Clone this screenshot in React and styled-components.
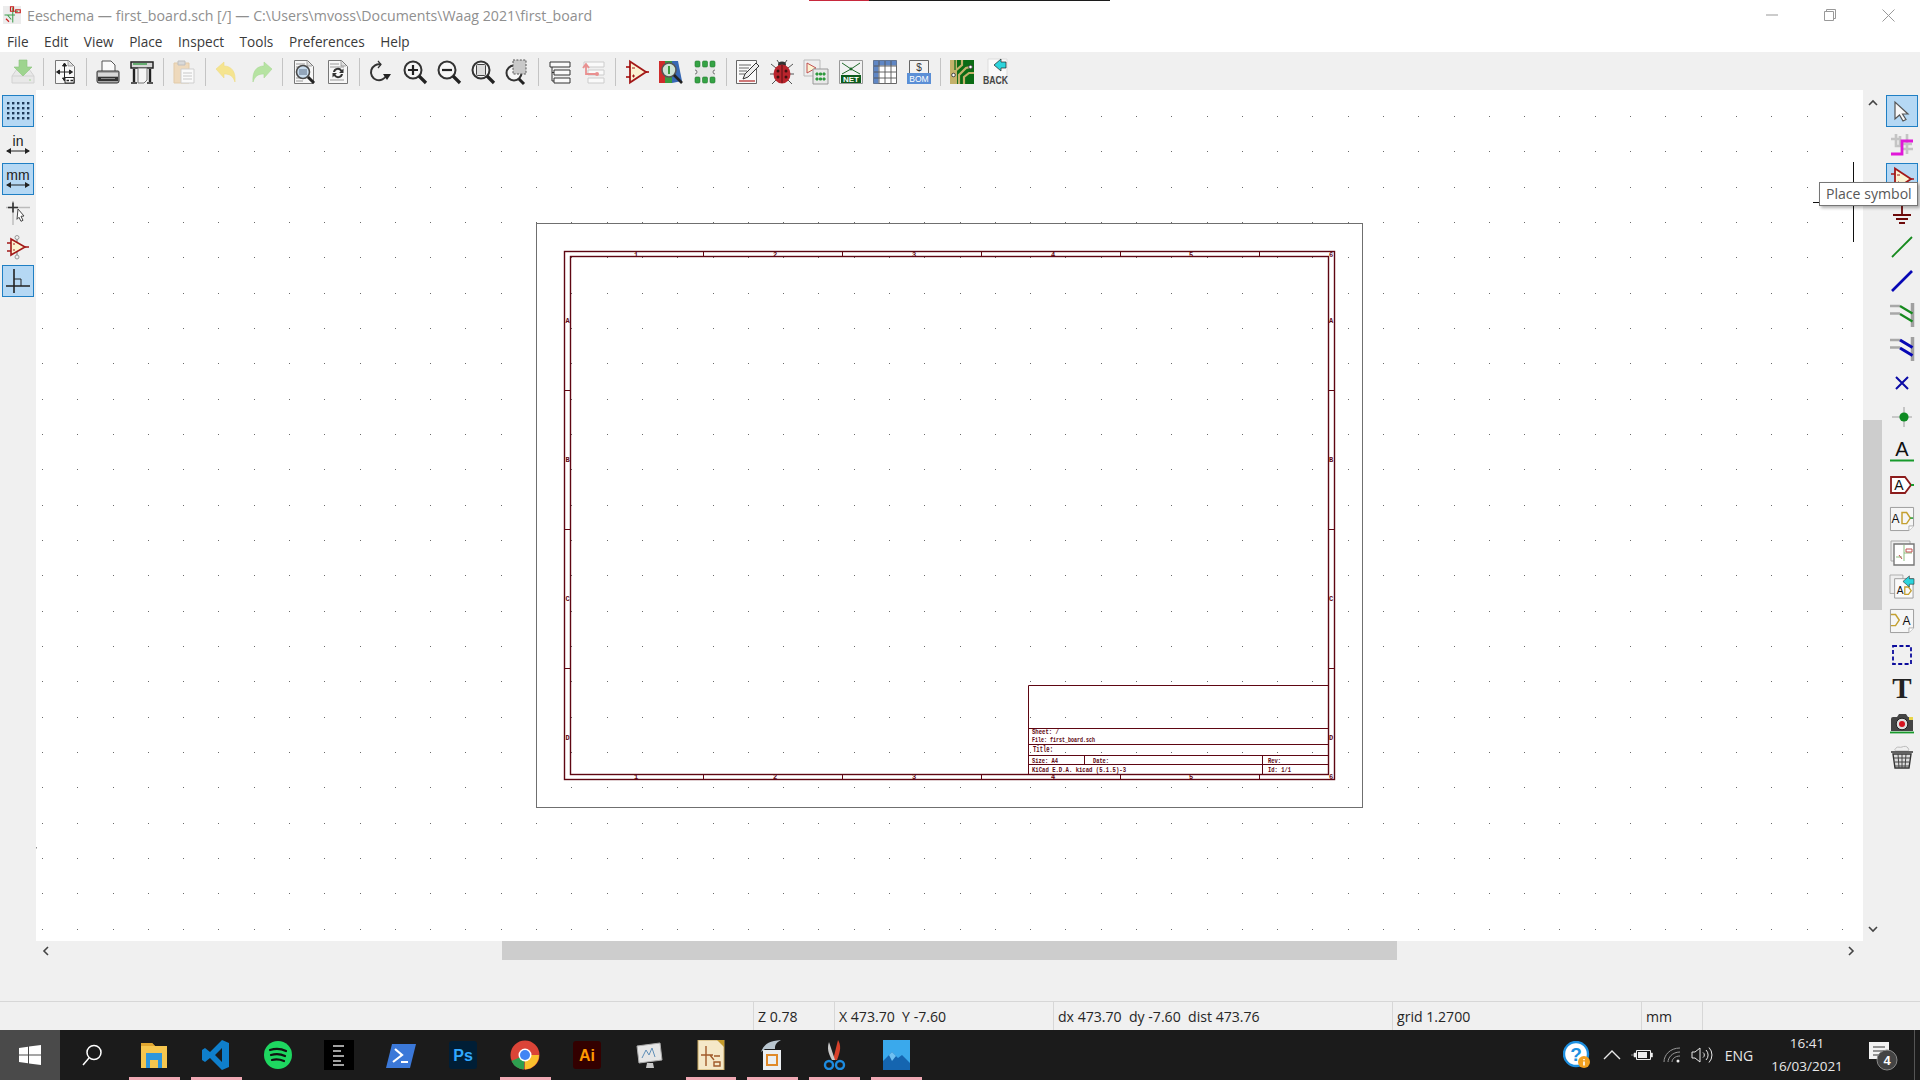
import React from "react";
import styled, { createGlobalStyle } from "styled-components";

const GlobalStyle = createGlobalStyle`
  html, body {
    margin: 0;
    padding: 0;
    background: #fff;
    overflow: hidden;
  }
  * {
    box-sizing: border-box;
  }
`;

const UI_FONT = `"Open Sans", "Noto Sans", sans-serif`;

const Window = styled.div`
  position: relative;
  width: 1920px;
  height: 1080px;
  display: flex;
  flex-direction: column;
  font-family: ${UI_FONT};
  color: #222;
  overflow: hidden;
`;

const TopEdge = styled.div`
  position: absolute;
  top: 0;
  left: 809px;
  width: 301px;
  height: 1px;
  background: linear-gradient(to right, #c8283c 60px, #1c1c1c 60px);
`;

const TitleBar = styled.div`
  height: 30px;
  display: flex;
  align-items: center;
  padding-left: 3px;
  background: #fff;
`;

const TitleText = styled.div`
  margin-left: 6px;
  font-size: 14.2px;
  color: #8f8f8f;
  white-space: pre;
  flex: 1;
`;

const WindowControls = styled.div`
  display: flex;
  align-items: center;
  padding-right: 25px;
  gap: 46px;
`;

const MenuBar = styled.div`
  height: 22px;
  display: flex;
  align-items: center;
  gap: 15.6px;
  padding-left: 7px;
  background: #fff;
`;

const MenuItem = styled.span`
  font-size: 13.6px;
  color: #3a3a3a;
`;

const TopToolbar = styled.div`
  height: 38px;
  display: flex;
  align-items: center;
  padding: 2px 0 0 5.4px;
  background: #f0f0f0;
`;

const ToolCell = styled.div`
  width: 34.25px;
  height: 34px;
  flex: none;
  display: flex;
  align-items: center;
  justify-content: center;
`;

const ToolSep = styled.div`
  width: 1px;
  height: 28px;
  flex: none;
  margin: 0 3.65px;
  background: #c4c4c4;
`;

const Workspace = styled.div`
  height: 870px;
  display: flex;
`;

const SideToolbar = styled.div`
  flex: none;
  width: ${(p) => p.$width}px;
  display: flex;
  flex-direction: column;
  gap: 2px;
  padding: 5px 0 0 ${(p) => p.$pad}px;
  background: #f0f0f0;
`;

const SideButton = styled.div`
  width: 32px;
  height: 32px;
  display: flex;
  align-items: center;
  justify-content: center;
  background: ${(p) => (p.$active ? "#b5d8f4" : "transparent")};
  border: 1px solid ${(p) => (p.$active ? "#1f7fc4" : "transparent")};
`;

const Center = styled.div`
  flex: 1;
  display: flex;
  flex-direction: column;
`;

const CanvasRow = styled.div`
  height: 851px;
  display: flex;
`;

const SchematicSvg = styled.svg`
  display: block;
  width: 1827px;
  height: 851px;
  background: #fff;
`;

const VScroll = styled.div`
  flex: none;
  width: 19px;
  display: flex;
  flex-direction: column;
  background: #f0f0f0;
`;

const VTrack = styled.div`
  height: ${(p) => p.$h}px;
  flex: none;
  display: flex;
  justify-content: center;
  align-items: ${(p) => p.$align};
  padding: 7px 0 6px;
`;

const VThumb = styled.div`
  height: 190px;
  flex: none;
  background: #cdcdcd;
`;

const HScroll = styled.div`
  height: 19px;
  display: flex;
  align-items: center;
  background: #f0f0f0;
`;

const HTrack = styled.div`
  width: ${(p) => p.$w}px;
  height: 19px;
  flex: none;
  display: flex;
  align-items: center;
  justify-content: ${(p) => p.$justify};
  padding: 0 25px 0 4px;
`;

const HThumb = styled.div`
  width: 895px;
  height: 19px;
  flex: none;
  background: #cdcdcd;
`;

const MessagePanel = styled.div`
  height: 42px;
  background: #f0f0f0;
  border-bottom: 1px solid #d7d7d7;
`;

const StatusBar = styled.div`
  height: 28px;
  display: flex;
  padding-left: 753px;
  background: #f0f0f0;
`;

const StatusField = styled.div`
  width: ${(p) => p.$w}px;
  flex: none;
  padding: 1px 0 0 4px;
  border-left: 1px solid #d7d7d7;
  font-size: 14.1px;
  line-height: 28px;
  white-space: pre;
  color: #262626;
`;

const Taskbar = styled.div`
  height: 50px;
  display: flex;
  align-items: center;
  background: #1b1b1b;
  color: #e8e8e8;
`;

const StartButton = styled.div`
  width: 60px;
  height: 50px;
  flex: none;
  display: flex;
  align-items: center;
  justify-content: center;
  background: #4a4a4a;
`;

const SearchCell = styled.div`
  width: 63px;
  flex: none;
  display: flex;
  justify-content: center;
`;

const TaskCell = styled.div`
  position: relative;
  width: 61.85px;
  height: 50px;
  flex: none;
  display: flex;
  align-items: center;
  justify-content: center;
  &::after {
    content: "";
    display: ${(p) => (p.$open ? "block" : "none")};
    position: absolute;
    left: 6px;
    right: 5px;
    bottom: 0;
    height: 3px;
    background: #f0a9b4;
  }
`;

const Tray = styled.div`
  margin-left: auto;
  display: flex;
  align-items: center;
  height: 50px;
`;

const TrayCell = styled.div`
  width: ${(p) => p.$w}px;
  flex: none;
  display: flex;
  align-items: center;
  justify-content: center;
  font-size: ${(p) => p.$size || 13.5}px;
`;

const Clock = styled.div`
  width: 86px;
  flex: none;
  margin-right: 9px;
  text-align: center;
  font-size: 13.5px;
  line-height: 23px;
`;

const ShowDesktop = styled.div`
  width: 1px;
  height: 50px;
  margin-left: 9px;
  margin-right: 5px;
  background: #555;
`;

const Tooltip = styled.div`
  position: absolute;
  left: 1819px;
  top: 182px;
  width: 99px;
  height: 24px;
  padding-left: 6px;
  background: #fff;
  border: 1px solid #767676;
  box-shadow: 2px 2px 3px rgba(0, 0, 0, 0.3);
  font-size: 14.1px;
  line-height: 21px;
  color: #575757;
  white-space: nowrap;
`;

const SheetText = styled.text`
  font-family: "Liberation Mono", monospace;
  font-size: ${(p) => p.$size || 7}px;
  font-weight: 700;
  fill: #5e0612;
`;

const Ico = ({ size = 24, view = "0 0 24 24", children }) => (
  <svg width={size} height={size} viewBox={view} overflow="visible">
    {children}
  </svg>
);

const Page = ({ x = 2, y = 0, w = 20, h = 24, fill = "#f7f7f7", stroke = "#777" }) => (
  <>
    <path
      d={`M${x + 0.5} ${y + 0.5}h${w - 7}l6 6v${h - 7}h-${w - 1}z`}
      fill={fill}
      stroke={stroke}
    />
    <path d={`M${x + w - 7} ${y + 1}v5h5`} fill="#ddd" stroke={stroke} strokeWidth=".6" />
  </>
);

const SaveIcon = () => (
  <Ico>
    <path d="M1 16l5-7h12l5 7v7H1z" fill="#e8e8e8" stroke="#d2d2d2" />
    <path d="M1 16h22" stroke="#d2d2d2" />
    <path d="M8 0h8v7h5l-9 9-9-9h5z" fill="#9ed48f" stroke="#8cc47c" strokeWidth=".6" />
    <circle cx="19" cy="20" r="1" fill="#b9dcae" />
  </Ico>
);

const PageSettingsIcon = () => (
  <Ico>
    <Page />
    <path d="M11.5 4v16M4 12h15M11.5 3l-2 3h4zM11.5 21l-2-3h4zM3.5 12l3-2v4zM19.5 12l-3-2v4z" stroke="#222" fill="#222" />
    <path d="M12 17.5h9V23h-9z" fill="#fff" stroke="#222" />
    <path d="M13.5 20.5h2.5M17.5 20.5h2.5" stroke="#222" strokeWidth="1.6" />
  </Ico>
);

const PrintIcon = () => (
  <Ico>
    <path d="M6 1h9l4 4v7H6z" fill="#fafafa" stroke="#555" />
    <path d="M2 11h20a1 1 0 0 1 1 1v9a2 2 0 0 1-2 2H3a2 2 0 0 1-2-2v-9a1 1 0 0 1 1-1z" fill="#a8a8a8" stroke="#333" />
    <path d="M2 13h20v3H2z" fill="#d8d8d8" />
    <path d="M2 17h20v4H2z" fill="#333" />
    <path d="M5 18.5h14" stroke="#888" />
  </Ico>
);

const PlotterIcon = () => (
  <Ico>
    <path d="M1 2h22v6H1z" fill="#d8d8d8" stroke="#222" strokeWidth="1.5" />
    <path d="M3 4h14" stroke="#3f9e4e" strokeWidth="1.5" />
    <path d="M4 9v13M20 9v13" stroke="#222" strokeWidth="2.4" />
    <path d="M1 23h6M17 23h6" stroke="#222" strokeWidth="1.6" />
    <path d="M8 8h9v12l-3 3H8z" fill="#f5f5f5" stroke="#777" />
  </Ico>
);

const PasteIcon = () => (
  <Ico>
    <path d="M2 3h15v20H2z" fill="#eed9bc" stroke="#e2cba9" />
    <path d="M6 1h7v4H6z" fill="#d9d9d9" stroke="#bfbfbf" />
    <path d="M9 9h13v14H9z" fill="#fafafa" stroke="#cfcfcf" />
    <path d="M11 13h9M11 16h9M11 19h9" stroke="#c8c8c8" />
  </Ico>
);

const UndoIcon = () => (
  <Ico>
    <path d="M1 9l8-7v4c7 0 12 5 11 16-2-6-5-8-11-8v4z" fill="#f5e48f" stroke="#efdc87" strokeWidth=".6" />
  </Ico>
);

const RedoIcon = () => (
  <Ico>
    <path d="M23 9l-8-7v4C8 6 3 11 4 22c2-6 5-8 11-8v4z" fill="#b6e3a2" stroke="#a9d996" strokeWidth=".6" />
  </Ico>
);

const FindIcon = () => (
  <Ico>
    <Page />
    <path d="M4 4h9M4 7h8M4 18h5M4 21h7" stroke="#999" />
    <circle cx="11" cy="12" r="6.5" fill="#c8dcee" stroke="#4a4a4a" strokeWidth="1.6" />
    <path d="M7 10h8M7 12h8M7 14h8" stroke="#5c6f86" />
    <path d="M16 17l6 6" stroke="#222" strokeWidth="3" />
  </Ico>
);

const ReplaceIcon = () => (
  <Ico>
    <Page />
    <path d="M4 4h9M4 7h14M4 20h14" stroke="#999" />
    <path d="M7 12a5 5 0 0 1 9-2l1.5-1.5V13H13l1.6-1.6A3 3 0 0 0 9 12zM17 14a5 5 0 0 1-9 2l-1.5 1.5V13H11l-1.6 1.6A3 3 0 0 0 15 14z" fill="#333" />
  </Ico>
);

const RefreshIcon = () => (
  <Ico>
    <path d="M18.500 15a8 8 0 1 1-5.500-10.500" fill="none" stroke="#333" strokeWidth="2" />
    <path d="M15 14h8l-4 6z" fill="#222" />
    <path d="M10 1l3 3.500-3 3.500" fill="none" stroke="#333" strokeWidth="1.200" />
  </Ico>
);

const ZoomBase = ({ children }) => (
  <Ico>
    <circle cx="10" cy="10" r="8.5" fill="#f6f6f6" stroke="#333" strokeWidth="2" />
    <path d="M16 16l7 7" stroke="#222" strokeWidth="3.2" />
    {children}
  </Ico>
);

const ZoomInIcon = () => (
  <ZoomBase>
    <path d="M5 10h10M10 5v10" stroke="#222" strokeWidth="2.2" />
  </ZoomBase>
);

const ZoomOutIcon = () => (
  <ZoomBase>
    <path d="M5 10h10" stroke="#222" strokeWidth="2.2" />
  </ZoomBase>
);

const ZoomFitIcon = () => (
  <ZoomBase>
    <rect x="5.5" y="4.5" width="9" height="11" rx="1" fill="#ddd" stroke="#444" />
  </ZoomBase>
);

const ZoomSelIcon = () => (
  <Ico>
    <circle cx="9" cy="13" r="7.5" fill="#f6f6f6" stroke="#333" strokeWidth="2" />
    <path d="M14 19l5 5" stroke="#222" strokeWidth="3" />
    <path d="M8 0h13v14H8z" fill="#c9c9c9" stroke="#555" strokeDasharray="2 1.4" />
  </Ico>
);

const HierarchyIcon = () => (
  <Ico>
    <path d="M2 2h20v5H2zM6 10h16v5H6zM6 18h16v5H6z" fill="#fafafa" stroke="#333" />
    <path d="M4 7v14h2M4 12.5h2" fill="none" stroke="#333" />
  </Ico>
);

const LeaveSheetIcon = () => (
  <Ico>
    <path d="M2 2h20v5H2zM6 10h16v5H6zM6 18h16v5H6z" fill="#fafafa" stroke="#ccc" />
    <path d="M4 15V5M1 8l3-4 3 4M4 14h10" fill="none" stroke="#e99090" strokeWidth="1.8" />
    <circle cx="15" cy="14" r="2" fill="#e99090" />
  </Ico>
);

const SymbolIcon = ({ size = 24, pins = "#a00000", fill = "#fbf3d2" }) => (
  <Ico size={size}>
    <path d="M5 1.5L21 12 5 22.5z" fill={fill} stroke="#a31818" strokeWidth="1.8" />
    <path d="M1 7h4M1 17h4M21 12h3" stroke={pins} strokeWidth="1.6" />
    <path d="M7 8h3M7 16h3M8.5 14.5v3" stroke="#a31818" />
  </Ico>
);

const LibBrowserIcon = () => (
  <Ico>
    <path d="M0 1h6v22H0z" fill="#cf2b2b" />
    <path d="M6 1h7v22H6z" fill="#3a9a3f" />
    <path d="M13 1h6l4 20-10 2z" fill="#3768b5" />
    <circle cx="10" cy="10" r="7" fill="#cfe3d6" stroke="#555" strokeWidth="1.6" />
    <path d="M10 6v8" stroke="#3a9a3f" strokeWidth="2" />
    <path d="M15 15l8 8" stroke="#222" strokeWidth="2.6" />
  </Ico>
);

const FootprintIcon = () => (
  <Ico>
    <path d="M2 6h20v12H2z" fill="#e6e6e6" />
    <path d="M2 10a2 2 0 0 1 0 4M22 10a2 2 0 0 0 0 4" fill="#f0f0f0" stroke="#777" />
    {[2, 9.500, 17].map((x) => (
      <React.Fragment key={x}>
        <rect x={x} y="1" width="5" height="6" rx="1.200" fill="#35a345" stroke="#217a2e" strokeWidth=".6" />
        <rect x={x} y="17" width="5" height="6" rx="1.200" fill="#35a345" stroke="#217a2e" strokeWidth=".6" />
      </React.Fragment>
    ))}
  </Ico>
);

const AnnotateIcon = () => (
  <Ico>
    <path d="M.5.5h20v23H.5z" fill="#fafafa" stroke="#666" />
    <path d="M3 5h12M3 8h10M3 11h8M3 14h6" stroke="#666" />
    <path d="M3 21h16" stroke="#b02020" strokeWidth="1.2" />
    <path d="M7 19l2-5L20 3l3 3-11 11z" fill="#eee" stroke="#333" />
  </Ico>
);

const BugIcon = () => (
  <Ico>
    <path d="M6 8L1 4M18 8l5-4M4 14H0M20 14h4M6 20l-4 4M18 20l4 4M9 3L7 0M15 3l2-3" stroke="#555" fill="none" />
    <ellipse cx="12" cy="4.5" rx="4" ry="3" fill="#333" />
    <ellipse cx="12" cy="14" rx="8.5" ry="9.5" fill="#b9242c" />
    <path d="M12 5v18" stroke="#5a1014" />
    <circle cx="8" cy="11" r="1.5" fill="#401010" />
    <circle cx="16" cy="11" r="1.5" fill="#401010" />
    <circle cx="8" cy="17" r="1.5" fill="#401010" />
    <circle cx="16" cy="17" r="1.5" fill="#401010" />
  </Ico>
);

const CvpcbIcon = () => (
  <Ico>
    <path d="M0 0h16v16H0z" fill="#eee" stroke="#bbb" />
    <path d="M3 3l9 5-9 5z" fill="#fbf3d2" stroke="#c25050" />
    <path d="M9 9h15v15H9z" fill="#e8e8e8" stroke="#999" />
    <path d="M12 13h2v2h-2zM15.5 13h2v2h-2zM19 13h2v2h-2zM12 18h2v2h-2zM15.5 18h2v2h-2zM19 18h2v2h-2z" fill="#2f9a3e" stroke="#2f9a3e" />
  </Ico>
);

const NetIcon = () => (
  <Ico>
    <path d="M.5.5h23v23H.5z" fill="#f2f2f2" stroke="#999" />
    <path d="M3 3l9 6 9-6M3 14l9-5 9 5" fill="none" stroke="#1f6a2a" />
    <circle cx="12" cy="9" r="1.4" fill="#1f6a2a" />
    <path d="M2 15h20v8H2z" fill="#0d5c1c" />
    <text x="12" y="22.4" textAnchor="middle" fontFamily="Liberation Sans" fontWeight="700" fontSize="8" fill="#fff">NET</text>
  </Ico>
);

const TableIcon = () => (
  <Ico>
    <path d="M.5.5h23v23H.5z" fill="#fff" stroke="#666" />
    <path d="M.5.5h23v5H.5zM.5.5h5v23h-5z" fill="#5f86c4" />
    <path d="M6 1v22M12 1v22M18 1v22M1 6h22M1 12h22M1 18h22" stroke="#555" strokeWidth=".9" />
  </Ico>
);

const BomIcon = () => (
  <Ico>
    <path d="M2.5.5h19v15h-19z" fill="#f3f3f3" stroke="#666" />
    <text x="12" y="11" textAnchor="middle" fontFamily="Liberation Sans" fontSize="10" fill="#333">$</text>
    <path d="M0 13h24v11H0z" fill="#5b8fd6" />
    <text x="12" y="22" textAnchor="middle" fontFamily="Liberation Sans" fontSize="8.5" fill="#fff">BOM</text>
  </Ico>
);

const PcbIcon = () => (
  <Ico>
    <path d="M0 0h24v24H0z" fill="#0b6b14" />
    <path d="M0 0h7v24H0z" fill="#c4b26b" />
    <path d="M3 24V13L12 5V0M9 24V15l7-7 4-1M14 24v-7l5-4h5" fill="none" stroke="#c4b26b" strokeWidth="2.200" />
    <path d="M5 0v10" stroke="#0b6b14" strokeWidth="1.200" />
    <circle cx="3.500" cy="15" r="1.800" fill="#fff" stroke="#444" />
    <circle cx="20.500" cy="7" r="1.800" fill="#fff" stroke="#444" />
  </Ico>
);

const BackIcon = () => (
  <Ico size={26} view="0 0 26 26">
    <path d="M5 0h19v18H5z" fill="#fafafa" stroke="#ddd" />
    <path d="M11 6l7-6v3h5v6h-5v3z" fill="#2cd4dc" stroke="#222" strokeWidth=".7" />
    <text x="0" y="25" fontFamily="Liberation Sans" fontWeight="700" fontSize="11" fill="#444" textLength="25" lengthAdjust="spacingAndGlyphs">BACK</text>
  </Ico>
);

const TOP_TOOLS = [
  [SaveIcon],
  "sep",
  [PageSettingsIcon],
  "sep",
  [PrintIcon],
  [PlotterIcon],
  "sep",
  [PasteIcon],
  "sep",
  [UndoIcon],
  [RedoIcon],
  "sep",
  [FindIcon],
  [ReplaceIcon],
  "sep",
  [RefreshIcon],
  [ZoomInIcon],
  [ZoomOutIcon],
  [ZoomFitIcon],
  [ZoomSelIcon],
  "sep",
  [HierarchyIcon],
  [LeaveSheetIcon],
  "sep",
  [SymbolIcon],
  [LibBrowserIcon],
  [FootprintIcon],
  "sep",
  [AnnotateIcon],
  [BugIcon],
  [CvpcbIcon],
  [NetIcon],
  [TableIcon],
  [BomIcon],
  "sep",
  [PcbIcon],
  [BackIcon],
];

const GridDotsIcon = () => (
  <Ico>
    {[3, 8, 13, 18].map((y) =>
      [1, 6, 11, 16, 21].map((x) => <rect key={`${x}-${y}`} x={x} y={y} width="2.4" height="2.4" fill="#1e3a5a" />)
    )}
  </Ico>
);

const UnitIcon = ({ label }) => (
  <Ico>
    <text x="12" y="13" textAnchor="middle" fontFamily="Liberation Sans" fontSize="14" fill="#222">{label}</text>
    <path d="M1 18h22" stroke="#222" />
    <path d="M0 18l5-3v6zM24 18l-5-3v6z" fill="#222" />
  </Ico>
);

const CursorIcon = () => (
  <Ico>
    <path d="M5 3v17l4.500-4 3.500 6 3-1.500-3.500-5.500H18z" fill="#f8f8f8" stroke="#555" strokeWidth="1.200" />
  </Ico>
);

const FullCrossIcon = () => (
  <Ico>
    <path d="M0 6.5h24M7 0v24" stroke="#bbb" strokeWidth="1.4" />
    <path d="M2 6.5h10M7 1.5v10" stroke="#333" strokeWidth="1.6" />
    <path d="M12 8l6 7-3 .3 2 4-2 1-2-4-2 2z" fill="#fff" stroke="#444" />
  </Ico>
);

const PinSymbolIcon = () => (
  <Ico>
    <circle cx="11" cy="2.5" r="2" fill="none" stroke="#999" />
    <circle cx="11" cy="22" r="2" fill="none" stroke="#999" />
    <path d="M11 4v3M11 17v3" stroke="#999" strokeWidth="1.5" />
    <path d="M5 4l14 8-14 8z" fill="#fbf3d2" stroke="#a31818" strokeWidth="1.6" />
    <path d="M1 8h4M1 16h4M19 12h4" stroke="#a31818" strokeWidth="1.4" />
    <path d="M7 9h2M7 15h2" stroke="#a31818" />
  </Ico>
);

const RightAngleIcon = () => (
  <Ico>
    <path d="M8 0v24M0 17h24" stroke="#222" strokeWidth="1.6" />
    <path d="M8 10h7v7" fill="none" stroke="#222" />
  </Ico>
);

const LEFT_TOOLS = [
  [<GridDotsIcon key="g" />, true],
  [<UnitIcon key="i" label="in" />, false],
  [<UnitIcon key="m" label="mm" />, true],
  [<FullCrossIcon key="c" />, false],
  [<PinSymbolIcon key="p" />, false],
  [<RightAngleIcon key="r" />, true],
];

const HighlightIcon = () => (
  <Ico>
    <path d="M6 1v12h4V3M17 1v20M1 6h8M12 11h10M13 16h10" stroke="#c4c4c4" strokeWidth="2.600" fill="none" />
    <path d="M1 21h11V8h11" fill="none" stroke="#e018d8" strokeWidth="2.800" />
  </Ico>
);

const GroundIcon = () => (
  <Ico>
    <path d="M12 2v12" stroke="#6e0a0a" strokeWidth="1.8" />
    <path d="M3 14h18M6 18h12M9 22h6" stroke="#6e0a0a" strokeWidth="2" />
  </Ico>
);

const WireIcon = ({ color, width = 1.8 }) => (
  <Ico>
    <path d="M2 22L22 2" stroke={color} strokeWidth={width} />
  </Ico>
);

const EntryIcon = ({ color, width = 2.2 }) => (
  <Ico>
    <path d="M22.500 0v24" stroke="#a0a0a0" strokeWidth="3.500" />
    <path d="M0 3h10M0 10.500h10" stroke="#a8a8a8" strokeWidth="2.600" />
    <path d="M10 3l12.500 7.500M10 11l12.500 7.500" stroke={color} strokeWidth={width} />
  </Ico>
);

const NoConnectIcon = () => (
  <Ico>
    <path d="M6 6l12 12M18 6L6 18" stroke="#0b0ba6" strokeWidth="2" />
  </Ico>
);

const JunctionIcon = () => (
  <Ico>
    <path d="M2 12h20M14 2v20" stroke="#bbb" strokeWidth="1.6" />
    <circle cx="14" cy="12" r="4.6" fill="#0d8a22" />
  </Ico>
);

const LabelIcon = () => (
  <Ico>
    <text x="12" y="17" textAnchor="middle" fontFamily="Liberation Sans" fontSize="20" fill="#111">A</text>
    <path d="M0 21.5h24" stroke="#189a2c" strokeWidth="2" />
  </Ico>
);

const GlobalLabelIcon = () => (
  <Ico>
    <path d="M1 4h14l6 8-6 8H1z" fill="#fff" stroke="#8c1c1c" strokeWidth="1.8" />
    <path d="M21 12h3" stroke="#189a2c" strokeWidth="2" />
    <text x="9" y="17" textAnchor="middle" fontFamily="Liberation Sans" fontSize="14" fill="#111">A</text>
  </Ico>
);

const SheetPage = ({ children }) => (
  <Ico view="0 0 26 26">
    <path d="M.5.5h25v20l-5 5H.5z" fill="#f6f6f6" stroke="#999" />
    <path d="M20.5 25.5v-5h5" fill="#fff" stroke="#aaa" />
    {children}
  </Ico>
);

const HierLabelIcon = () => (
  <SheetPage>
    <text x="6" y="17" textAnchor="middle" fontFamily="Liberation Sans" fontSize="13" fill="#111">A</text>
    <path d="M13 6h5l4 6-4 6h-5z" fill="none" stroke="#c4a030" strokeWidth="1.6" />
    <path d="M22 12h3" stroke="#189a2c" strokeWidth="1.6" />
  </SheetPage>
);

const SheetSymbolIcon = () => (
  <Ico>
    <path d="M1 0h19v20H1z" fill="#eee" stroke="#aaa" />
    <path d="M4 3h20v21H4z" fill="#fff" stroke="#777" strokeWidth="1.4" />
    <path d="M6 16h6M14 4v16M14 12h8" stroke="#8dbd7e" />
    <path d="M16 8h6v3h-6zM9 14l3 4" fill="none" stroke="#c25050" />
  </Ico>
);

const ImportPinIcon = () => (
  <Ico view="0 0 26 26">
    <path d="M0 0h14v20H0z" fill="#eee" stroke="#aaa" />
    <path d="M5 4h20v21H5z" fill="#fafafa" stroke="#999" />
    <text x="11" y="21" textAnchor="middle" fontFamily="Liberation Sans" fontSize="11" fill="#111">A</text>
    <path d="M16 13h4l3 4-3 4h-4z" fill="none" stroke="#c4a030" strokeWidth="1.4" />
    <path d="M14 7l7-6v3h5v6h-5v3z" fill="#2cd4dc" stroke="#222" strokeWidth=".6" />
  </Ico>
);

const SheetPinIcon = () => (
  <SheetPage>
    <path d="M1 6h5l4 6-4 6H1" fill="none" stroke="#c4a030" strokeWidth="1.6" />
    <text x="18" y="17" textAnchor="middle" fontFamily="Liberation Sans" fontSize="13" fill="#111">A</text>
  </SheetPage>
);

const DashedBoxIcon = () => (
  <Ico>
    <path d="M3 3h18v18H3z" fill="none" stroke="#0b0b9c" strokeWidth="1.8" strokeDasharray="4 2.4" />
  </Ico>
);

const TextIcon = () => (
  <Ico>
    <text x="12" y="21" textAnchor="middle" fontFamily="Liberation Serif" fontWeight="700" fontSize="29" fill="#222">T</text>
  </Ico>
);

const CameraIcon = () => (
  <Ico>
    <path d="M1 8a2 2 0 0 1 2-2h4l2-3h7l2 3h4a1 1 0 0 1 1 1v13H1z" fill="#444" />
    <circle cx="12" cy="13" r="5.8" fill="#ddd" stroke="#222" />
    <circle cx="12" cy="13" r="3" fill="#d4121e" />
    <path d="M19 6h4v3h-4z" fill="#e8d54a" />
    <path d="M0 21.5h24" stroke="#189a2c" strokeWidth="1.8" />
  </Ico>
);

const TrashIcon = () => (
  <Ico>
    <path d="M6 3c2-2 4 0 6-1s5-1 6 1 1 2 0 3H6C4 5 5 4 6 3z" fill="#efefef" stroke="#bbb" />
    <path d="M1 7h22M3 9h18l-2 14H5z" stroke="#333" strokeWidth="1.4" fill="#ddd" />
    <path d="M8 9l1 14M12 9v14M16 9l-1 14M4 13h16M5 17h14M5 21h14" stroke="#444" />
  </Ico>
);

const RIGHT_TOOLS = [
  [<CursorIcon key="a" />, true],
  [<HighlightIcon key="b" />],
  [<SymbolIcon key="c" pins="#a31818" />, true],
  [<GroundIcon key="d" />],
  [<WireIcon key="e" color="#168a1e" />],
  [<WireIcon key="f" color="#0707b5" width={2.6} />],
  [<EntryIcon key="g" color="#168a1e" />],
  [<EntryIcon key="h" color="#0707b5" width={3} />],
  [<NoConnectIcon key="i" />],
  [<JunctionIcon key="j" />],
  [<LabelIcon key="k" />],
  [<GlobalLabelIcon key="l" />],
  [<HierLabelIcon key="m" />],
  [<SheetSymbolIcon key="n" />],
  [<ImportPinIcon key="o" />],
  [<SheetPinIcon key="p" />],
  [<DashedBoxIcon key="q" />],
  [<TextIcon key="r" />],
  [<CameraIcon key="s" />],
  [<TrashIcon key="t" />],
];

const EeschemaLogo = () => (
  <Ico size={18}>
    <path d="M0 0h24v24H0z" fill="#ececec" />
    <path d="M2 12h14M13 2v20M6 12l5 6M13 7h7" stroke="#3f9e4e" strokeWidth="1.4" />
    <path d="M10 1h4v6h-4zM17 5h6v4h-6zM4 17l4 4" fill="none" stroke="#c22" strokeWidth="1.6" />
  </Ico>
);

const TitleLine = ({ x, y, w, size, children }) => (
  <SheetText x={x} y={y} $size={size} textLength={w} lengthAdjust="spacingAndGlyphs">
    {children}
  </SheetText>
);

const Schematic = () => {
  const dots = [];
  for (let i = 0; i < 52; i++) {
    for (let j = 0; j < 25; j++) {
      dots.push([Math.round(42 + i * 35.29), Math.round(116 + j * 35.33)]);
    }
  }
  const vTicks = [703, 842, 981, 1120, 1259];
  const hTicks = [390, 529, 668];
  const colLabels = [636, 775, 914, 1053, 1191, 1331];
  const rowLabels = [["A", 323], ["B", 462], ["C", 601], ["D", 740]];
  return (
    <SchematicSvg viewBox="36 90 1827 851">
      {dots.map(([x, y]) => (
        <rect key={`${x}-${y}`} x={x} y={y} width="1" height="1" fill="#6a6a6a" />
      ))}
      <rect x="35" y="847" width="1.5" height="1.5" fill="#222" />
      <rect x="536.5" y="223.5" width="826" height="584" fill="none" stroke="#6f6f6f" />
      <g fill="none" stroke="#5e0612">
        <rect x="564.5" y="251.5" width="770" height="528" strokeWidth="1.4" />
        <rect x="570.5" y="256.5" width="758" height="518" strokeWidth="1.4" />
        <path d="M1028.5 685.5h300M1028.5 685.5v89M1028.5 728.5h300M1028.5 744.5h300M1028.5 755.5h300M1028.5 764.5h300M1084.5 755.5v9M1262.5 755.5v19" />
        {vTicks.map((x) => (
          <path key={x} d={`M${x + 0.5} 251v5M${x + 0.5} 774v5`} />
        ))}
        {hTicks.map((y) => (
          <path key={y} d={`M564 ${y + 0.5}h6M1328 ${y + 0.5}h6`} />
        ))}
      </g>
      {colLabels.map((x, i) => (
        <React.Fragment key={x}>
          <SheetText x={x} y="256.500" textAnchor="middle">{i + 1}</SheetText>
          <SheetText x={x} y="779" textAnchor="middle">{i + 1}</SheetText>
        </React.Fragment>
      ))}
      {rowLabels.map(([l, y]) => (
        <React.Fragment key={l}>
          <SheetText x="567.500" y={y} textAnchor="middle">{l}</SheetText>
          <SheetText x="1331" y={y} textAnchor="middle">{l}</SheetText>
        </React.Fragment>
      ))}
      <TitleLine x={1032} y={734} w={27} size={6.5}>Sheet: /</TitleLine>
      <TitleLine x={1032} y={742} w={63} size={6.5}>File: first_board.sch</TitleLine>
      <TitleLine x={1033} y={752} w={20} size={9}>Title:</TitleLine>
      <TitleLine x={1032} y={763} w={26} size={6.5}>Size: A4</TitleLine>
      <TitleLine x={1093} y={763} w={16} size={6.5}>Date:</TitleLine>
      <TitleLine x={1268} y={763} w={13} size={6.5}>Rev:</TitleLine>
      <TitleLine x={1032} y={771.5} w={94} size={6.5}>KiCad E.D.A.  kicad (5.1.5)-3</TitleLine>
      <TitleLine x={1268} y={771.5} w={23} size={6.5}>Id: 1/1</TitleLine>
      <path d="M1853.5 162v80M1813 202.5h50" stroke="#111" />
    </SchematicSvg>
  );
};

const Chevron = ({ d }) => (
  <svg width="12" height="12" viewBox="0 0 12 12">
    <path d={d} fill="none" stroke="#444" strokeWidth="1.6" />
  </svg>
);

const WinLogo = () => (
  <svg width="22" height="20" viewBox="0 0 22 20">
    <path d="M0 3l9-1.3V9.5H0zM10 1.5L22 0v9.5H10zM0 10.5h9v7.8L0 17zM10 10.5h12V20l-12-1.6z" fill="#fff" />
  </svg>
);

const TaskIcon = ({ children, size = 30 }) => (
  <svg width={size} height={size} viewBox="0 0 30 30">
    {children}
  </svg>
);

const TASK_APPS = [
  {
    open: true,
    icon: (
      <TaskIcon>
        <path d="M2 3h11l3 3h12v22H2z" fill="#f6c64e" />
        <path d="M2 3h11l3 3H2z" fill="#e0a630" />
        <path d="M7 13h16v15h-4v-8h-8v8H7z" fill="#2f96dc" />
      </TaskIcon>
    ),
  },
  {
    open: true,
    icon: (
      <TaskIcon>
        <path d="M21 0l7 3v24l-7 3L9 18l-5 4-3-2v-10l3-2 5 4zM21 8l-7 7 7 7z" fill="#0f7fcc" fillRule="evenodd" />
      </TaskIcon>
    ),
  },
  {
    icon: (
      <TaskIcon>
        <circle cx="15" cy="15" r="14" fill="#1ed760" />
        <path d="M7 10c6-2 11-1.5 16 1M8 15c5-1.5 10-1 14 1M9 20c4-1 8-.6 12 1" fill="none" stroke="#111" strokeWidth="2.2" strokeLinecap="round" />
      </TaskIcon>
    ),
  },
  {
    icon: (
      <TaskIcon>
        <path d="M0 0h30v30H0z" fill="#000" />
        <path d="M9 6h11M9 11h8M9 16h11M9 21h8M9 25h11" stroke="#d8d8d8" strokeWidth="1.6" />
      </TaskIcon>
    ),
  },
  {
    icon: (
      <TaskIcon>
        <path d="M6 4h24l-6 24H0z" fill="#3b78d8" />
        <path d="M9 9l7 6-9 7M15 22h7" fill="none" stroke="#fff" strokeWidth="2.2" />
      </TaskIcon>
    ),
  },
  {
    icon: (
      <TaskIcon>
        <rect x="1" y="1" width="28" height="28" rx="3" fill="#001e36" />
        <text x="15" y="21" textAnchor="middle" fontFamily="Liberation Sans" fontWeight="700" fontSize="16" fill="#31a8ff">Ps</text>
      </TaskIcon>
    ),
  },
  {
    open: true,
    icon: (
      <TaskIcon>
        <circle cx="15" cy="15" r="14.5" fill="#db4437" />
        <path d="M15 15h14a14.5 14.5 0 0 1-14 14.500z" fill="#fbc02d" />
        <path d="M15 15l-1 14.500A14.5 14.5 0 0 1 1.500 21z" fill="#2e9e4f" />
        <circle cx="15" cy="15" r="6.5" fill="#fff" />
        <circle cx="15" cy="15" r="5" fill="#4285f4" />
      </TaskIcon>
    ),
  },
  {
    icon: (
      <TaskIcon>
        <rect x="1" y="1" width="28" height="28" rx="3" fill="#330000" />
        <text x="15" y="21" textAnchor="middle" fontFamily="Liberation Sans" fontWeight="700" fontSize="16" fill="#ff9a00">Ai</text>
      </TaskIcon>
    ),
  },
  {
    icon: (
      <TaskIcon>
        <path d="M3 6l23-3 2 17-23 3z" fill="#e6e6e6" stroke="#aaa" />
        <path d="M8 18l4-8 3 5 3-7 3 9" fill="none" stroke="#5f8fb8" />
        <path d="M13 23h6l1 5h-8z" fill="#c8c8c8" />
      </TaskIcon>
    ),
  },
  {
    open: true,
    icon: (
      <TaskIcon>
        <path d="M2 0h26v30H2z" fill="#f5e8c8" stroke="#c8a860" />
        <path d="M21 0h7v7z" fill="#c49a2a" />
        <path d="M10 6v20M5 15h12M14 15l4 5M18 22h6v4h-6zM18 16h6" fill="none" stroke="#a05a2a" strokeWidth="1.4" />
      </TaskIcon>
    ),
  },
  {
    open: true,
    icon: (
      <TaskIcon>
        <path d="M6 10h18v20H6z" fill="#eceff2" />
        <path d="M4 12C7 4 12 1 24 0c-6 3-6 6-6 9H8z" fill="#b9c6d0" />
        <path d="M10 15h10v10H10z" fill="none" stroke="#e08a2a" strokeWidth="2" />
      </TaskIcon>
    ),
  },
  {
    open: true,
    icon: (
      <TaskIcon>
        <path d="M14 20L19 0c3 5 3 10-1 20z" fill="#d8402a" />
        <path d="M16 20l-6-18c-2 6-1 11 3 18z" fill="#c9c9c9" />
        <circle cx="10" cy="25" r="4" fill="none" stroke="#1d8be0" strokeWidth="2.4" />
        <circle cx="21" cy="25" r="4" fill="none" stroke="#1d8be0" strokeWidth="2.4" />
      </TaskIcon>
    ),
  },
  {
    open: true,
    icon: (
      <TaskIcon>
        <path d="M2 0h27v30H2z" fill="#3aa9ec" />
        <path d="M2 30V21l9-9 6 6 4-3 8 8v7z" fill="#1565b0" />
        <path d="M11 12l4 4-4 5-3-6z" fill="#6fc1f2" />
      </TaskIcon>
    ),
  },
];

const TopTool = ({ tool }) => {
  if (tool === "sep") return <ToolSep />;
  const Icon = tool[0];
  return (
    <ToolCell>
      <Icon />
    </ToolCell>
  );
};

const App = () => (
  <Window>
    <GlobalStyle />
    <TopEdge />
    <TitleBar>
      <EeschemaLogo />
      <TitleText>{"Eeschema — first_board.sch [/] — C:\\Users\\mvoss\\Documents\\Waag 2021\\first_board"}</TitleText>
      <WindowControls>
        <svg width="12" height="12" viewBox="0 0 12 12">
          <path d="M0 6h12" stroke="#999" />
        </svg>
        <svg width="12" height="12" viewBox="0 0 12 12">
          <path d="M.5 2.5h9v9h-9zM2.500 2.500v-2h9v9h-2" fill="none" stroke="#999" />
        </svg>
        <svg width="13" height="13" viewBox="0 0 13 13">
          <path d="M.5.5l12 12M12.500.5l-12 12" stroke="#999" />
        </svg>
      </WindowControls>
    </TitleBar>
    <MenuBar>
      {["File", "Edit", "View", "Place", "Inspect", "Tools", "Preferences", "Help"].map((m) => (
        <MenuItem key={m}>{m}</MenuItem>
      ))}
    </MenuBar>
    <TopToolbar>
      {TOP_TOOLS.map((tool, i) => (
        <TopTool key={i} tool={tool} />
      ))}
    </TopToolbar>
    <Workspace>
      <SideToolbar $width={36} $pad={2}>
        {LEFT_TOOLS.map(([icon, active], i) => (
          <SideButton key={i} $active={active}>
            {icon}
          </SideButton>
        ))}
      </SideToolbar>
      <Center>
        <CanvasRow>
          <Schematic />
          <VScroll>
            <VTrack $h={330} $align="flex-start">
              <Chevron d="M2 8l4-4 4 4" />
            </VTrack>
            <VThumb />
            <VTrack $h={331} $align="flex-end">
              <Chevron d="M2 4l4 4 4-4" />
            </VTrack>
          </VScroll>
        </CanvasRow>
        <HScroll>
          <HTrack $w={466} $justify="flex-start">
            <Chevron d="M8 2L4 6l4 4" />
          </HTrack>
          <HThumb />
          <HTrack $w={485} $justify="flex-end">
            <Chevron d="M4 2l4 4-4 4" />
          </HTrack>
        </HScroll>
      </Center>
      <SideToolbar $width={38} $pad={4}>
        {RIGHT_TOOLS.map(([icon, active], i) => (
          <SideButton key={i} $active={active}>
            {icon}
          </SideButton>
        ))}
      </SideToolbar>
    </Workspace>
    <MessagePanel />
    <StatusBar>
      <StatusField $w={81}>Z 0.78</StatusField>
      <StatusField $w={219}>X 473.70  Y -7.60</StatusField>
      <StatusField $w={339}>dx 473.70  dy -7.60  dist 473.76</StatusField>
      <StatusField $w={249}>grid 1.2700</StatusField>
      <StatusField $w={61}>mm</StatusField>
      <StatusField $w={218} />
    </StatusBar>
    <Taskbar>
      <StartButton>
        <WinLogo />
      </StartButton>
      <SearchCell>
        <svg width="22" height="22" viewBox="0 0 22 22">
          <circle cx="13" cy="8.5" r="7" fill="none" stroke="#fff" strokeWidth="1.5" />
          <path d="M8 14l-6 7" stroke="#fff" strokeWidth="1.5" />
        </svg>
      </SearchCell>
      {TASK_APPS.map((app, i) => (
        <TaskCell key={i} $open={app.open}>
          {app.icon}
        </TaskCell>
      ))}
      <Tray>
        <TrayCell $w={34}>
          <svg width="28" height="28" viewBox="0 0 28 28">
            <circle cx="13" cy="13" r="12" fill="#fff" stroke="#1d8fe0" strokeWidth="2.4" />
            <text x="13" y="20" textAnchor="middle" fontFamily="Liberation Sans" fontWeight="700" fontSize="19" fill="#1d8fe0">?</text>
            <circle cx="21" cy="21" r="6" fill="#f0a020" />
            <path d="M21 18v1.200M21 20.500v4" stroke="#fff" strokeWidth="1.6" />
          </svg>
        </TrayCell>
        <TrayCell $w={36}>
          <svg width="18" height="12" viewBox="0 0 18 12">
            <path d="M1 10l8-8 8 8" fill="none" stroke="#e8e8e8" strokeWidth="1.4" />
          </svg>
        </TrayCell>
        <TrayCell $w={24}>
          <svg width="22" height="14" viewBox="0 0 22 14">
            <path d="M5.500 2.500h14v9h-14z" fill="#1b1b1b" stroke="#eee" />
            <path d="M7 4h9v6H7z" fill="#eee" />
            <path d="M20 5h1.500v4H20zM0 7h3M3 5h2v4H3z" fill="#eee" stroke="#eee" strokeWidth=".5" />
          </svg>
        </TrayCell>
        <TrayCell $w={36}>
          <svg width="18" height="16" viewBox="0 0 18 16">
            <path d="M1 15C1 8 7 1 17 1M5 15c0-4 4-10 12-10M9 15c0-3 3-6 8-6" fill="none" stroke="#999" />
            <circle cx="15" cy="14" r="1.5" fill="#eee" />
          </svg>
        </TrayCell>
        <TrayCell $w={24}>
          <svg width="22" height="18" viewBox="0 0 22 18">
            <path d="M1 6h3l5-4v14l-5-4H1z" fill="none" stroke="#e8e8e8" />
            <path d="M12 6.500a3 3 0 0 1 0 5M15 4a7 7 0 0 1 0 10M18 1.500a11 11 0 0 1 0 15" fill="none" stroke="#e8e8e8" />
          </svg>
        </TrayCell>
        <TrayCell $w={50} $size={14}>ENG</TrayCell>
        <Clock>
          <div>16:41</div>
          <div>16/03/2021</div>
        </Clock>
        <TrayCell $w={46}>
          <svg width="32" height="32" viewBox="0 0 32 32">
            <path d="M3 3h20v17H3z" fill="#f2f2f2" />
            <path d="M7 8h12M7 12h12M7 16h8" stroke="#333" />
            <circle cx="21" cy="21" r="10" fill="#444" stroke="#888" />
            <text x="21" y="26" textAnchor="middle" fontFamily="Liberation Sans" fontWeight="700" fontSize="13" fill="#fff">4</text>
          </svg>
        </TrayCell>
        <ShowDesktop />
      </Tray>
    </Taskbar>
    <Tooltip>Place symbol</Tooltip>
  </Window>
);

export default App;
